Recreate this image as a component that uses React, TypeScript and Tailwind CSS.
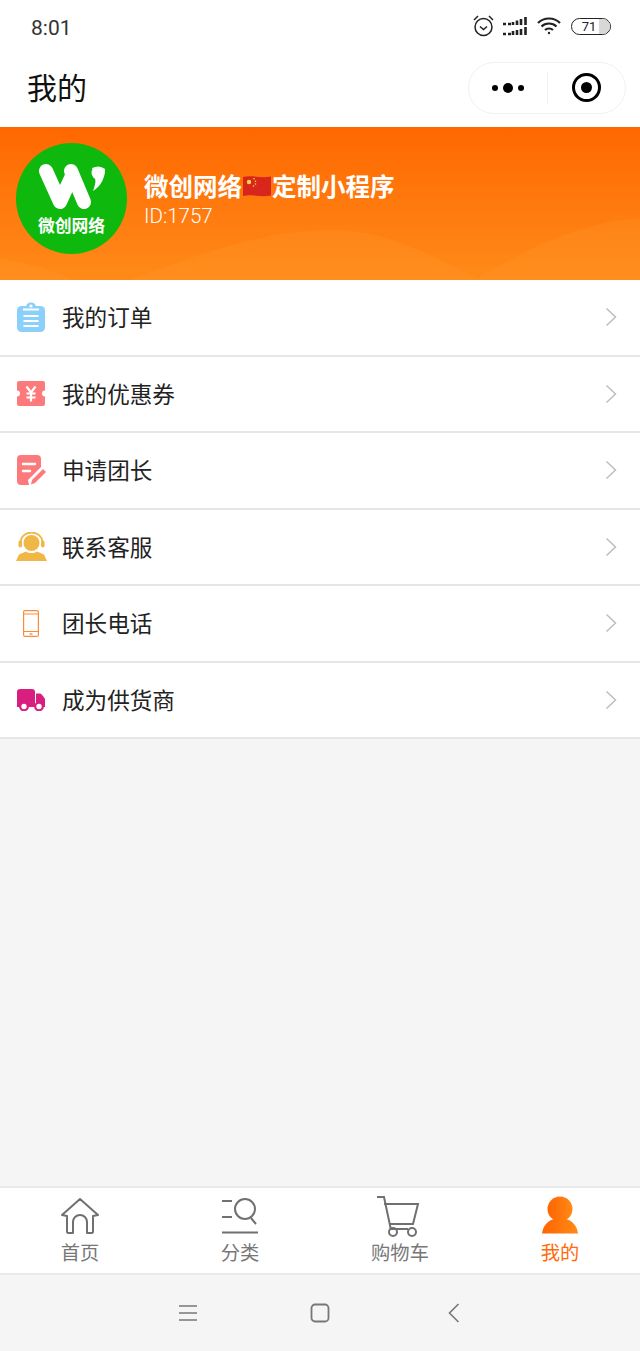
import type { ReactNode } from 'react'

const cjk = "font-['Noto_Sans_CJK_SC','Noto_Sans',sans-serif]"

function ClipboardIcon() {
  return (
    <svg width="30" height="30" viewBox="0 0 30 30">
      <rect x="1" y="4" width="28" height="26" rx="4.5" fill="#8bd0fb" />
      <path d="M10 5.5C10 2 12 .5 15 .5s5 1.500 5 5v2H10z" fill="#8bd0fb" />
      <circle cx="15" cy="4" r="1.6" fill="#fff" />
      <path d="M7 7.500h16M7.500 14h15M7.500 19h15M7.500 24h15" stroke="#fff" strokeWidth="2" />
    </svg>
  )
}

function TicketIcon() {
  return (
    <svg width="30" height="25" viewBox="0 0 30 25">
      <path
        d="M3 0h24a2 2 0 0 1 2 2v7.500a3 3 0 0 0 0 6V23a2 2 0 0 1-2 2H3a2 2 0 0 1-2-2v-7.500a3 3 0 0 0 0-6V2a2 2 0 0 1 2-2z"
        fill="#fd7a7c"
      />
      <path d="M10.500 5.500l4.500 6 4.500-6M15 11.500v9M10.500 12.500h9M10.500 16.500h9" stroke="#fff" strokeWidth="2.200" fill="none" />
    </svg>
  )
}

function ApplyIcon() {
  return (
    <svg width="29" height="30" viewBox="0 0 29 30">
      <path
        d="M4 0h16a4 4 0 0 1 4 4v8L11 25l1 5H4a4 4 0 0 1-4-4V4a4 4 0 0 1 4-4z"
        fill="#fd7a7c"
      />
      <path d="M6 9h12M6 16h7" stroke="#fff" strokeWidth="2.400" strokeLinecap="round" />
      <path d="M14 29.500l1-4.500L26 14l3 3-11 11z" fill="#fd7a7c" />
    </svg>
  )
}

function ServiceIcon() {
  return (
    <svg width="31" height="29" viewBox="0 0 31 29">
      <circle cx="15.500" cy="11" r="8" fill="#f1b746" />
      <path d="M4.500 13V10.500a11 10 0 0 1 22 0V13" fill="none" stroke="#f1b746" strokeWidth="1.800" />
      <rect x="2.500" y="8.500" width="3.500" height="7" rx="1.700" fill="#f1b746" />
      <rect x="25" y="8.500" width="3.500" height="7" rx="1.700" fill="#f1b746" />
      <path d="M0 29l3-6.500 7-3c3 2 8 2 11 0l7 3 3 6.500z" fill="#f1b746" />
    </svg>
  )
}

function PhoneIcon() {
  return (
    <svg width="16" height="27" viewBox="0 0 16 27" fill="none" stroke="#fb8b3c" strokeWidth="1.200">
      <rect x=".6" y=".6" width="14.800" height="25.800" rx="1.500" />
      <path d="M1 4h14M1 21.500h14" />
      <path d="M6.500 24h3" strokeWidth="1.400" />
    </svg>
  )
}

function TruckIcon() {
  return (
    <svg width="28" height="22" viewBox="0 0 28 22">
      <path d="M3 0h12a3 3 0 0 1 3 3v15H0V3a3 3 0 0 1 3-3z" fill="#d81e7f" />
      <path d="M19 4.500h3.500c1 0 1.700.4 2.200 1l2.800 3.500c.3.400.5 1 .5 1.500V18H19z" fill="#d81e7f" />
      <circle cx="7" cy="17.500" r="3.800" fill="#fff" stroke="#d81e7f" strokeWidth="2.200" />
      <circle cx="22" cy="17.500" r="3.800" fill="#fff" stroke="#d81e7f" strokeWidth="2.200" />
    </svg>
  )
}

function Flag() {
  return (
    <svg width="30" height="24" viewBox="0 0 30 24" className="shrink-0">
      <path d="M1 3c9-2 18 1.500 28-.5v19c-10 2-19-1.500-28 .5z" fill="#d8261c" />
      <circle cx="7" cy="8" r="2.200" fill="#fbd64a" />
      <circle cx="12" cy="4.800" r=".8" fill="#fbd64a" />
      <circle cx="13.500" cy="7.200" r=".8" fill="#fbd64a" />
      <circle cx="13.500" cy="10" r=".8" fill="#fbd64a" />
      <circle cx="11.500" cy="12" r=".8" fill="#fbd64a" />
    </svg>
  )
}

function Logo() {
  return (
    <div className="relative w-[111px] h-[111px] rounded-full bg-[#0fb80c] flex flex-col items-center shrink-0">
      <svg width="70" height="52" viewBox="0 0 70 52" className="mt-[17px] shrink-0">
        <path d="M9 11l14 31L34 18" fill="none" stroke="#fff" strokeWidth="14" strokeLinecap="round" strokeLinejoin="round" />
        <path d="M34 11l13 31" fill="none" stroke="#fff" strokeWidth="14" strokeLinecap="round" />
        <circle cx="61" cy="13" r="6.500" fill="#fff" />
        <path d="M55 8c5-2 11-1 13 1 0 9-4 17-12 22 2-5 3-10 2-12z" fill="#fff" />
      </svg>
      <span className={`${cjk} text-white text-[16.8px] leading-5 font-bold mt-[3px]`}>微创网络</span>
    </div>
  )
}

function Row({ icon, label }: { icon: ReactNode; label: string }) {
  return (
    <div className="h-[76.5px] bg-white border-b-2 border-[#e6e6e6] flex items-center">
      <div className="w-[62px] flex justify-center shrink-0">{icon}</div>
      <span className={`${cjk} text-[22.6px] text-[#222] flex-1`}>{label}</span>
      <svg width="12" height="20" viewBox="0 0 12 20" className="mr-[23px]" fill="none" stroke="#bdbdbd" strokeWidth="1.500">
        <path d="M1.500 1.500L10.500 10l-9 8.500" />
      </svg>
    </div>
  )
}

function Tab({ icon, label, active }: { icon: ReactNode; label: string; active?: boolean }) {
  return (
    <div className="flex-1 flex flex-col items-center">
      <div className="h-[46px] flex items-end justify-center">{icon}</div>
      <span className={`${cjk} text-[19.3px] leading-[28px] mt-[4px] ${active ? 'text-[#ff6a0a]' : 'text-[#777]'}`}>{label}</span>
    </div>
  )
}

const rows = [
  { label: '我的订单', icon: <ClipboardIcon /> },
  { label: '我的优惠券', icon: <TicketIcon /> },
  { label: '申请团长', icon: <ApplyIcon /> },
  { label: '联系客服', icon: <ServiceIcon /> },
  { label: '团长电话', icon: <PhoneIcon /> },
  { label: '成为供货商', icon: <TruckIcon /> },
]

export default function App() {
  return (
    <div className="w-[640px] h-[1351px] flex flex-col bg-[#f5f5f5] overflow-hidden">
      {/* status bar */}
      <div className="h-[54px] bg-white flex items-center justify-between pl-[31px] pr-[29px] shrink-0">
        <span className="font-['Roboto',sans-serif] text-[21px] text-[#333] mt-[3px]">8:01</span>
        <div className="flex items-center gap-[9px] -mt-[2px]">
          <svg width="21" height="22" viewBox="0 0 21 22" fill="none" stroke="#222" strokeWidth="1.500">
            <circle cx="10.500" cy="12" r="8.500" />
            <path d="M7 11.500l3.500 3 3.500-3M1 5l4-4M20 5l-4-4" />
          </svg>
          <svg width="24" height="19" viewBox="0 0 24 19" stroke="#222" strokeWidth="2.600">
            <path d="M0 7h3M5 7h3M10 8V5M14 8V3.500M18 8V2M22.500 8V0" />
            <path d="M0 17h3M5 17h3M10 18v-4M14 18v-5M18 18v-6M22.500 18v-8" />
          </svg>
          <svg width="24" height="18" viewBox="0 0 24 18" fill="none" stroke="#222" strokeWidth="2.200" className="ml-[1px]">
            <path d="M1 6c6-6 16-6 22 0M4.500 9.500c4-4 11-4 15 0M8 13c2-2 6-2 8 0" />
            <circle cx="12" cy="16" r="1.200" fill="#222" stroke="none" />
          </svg>
          <div className="relative w-[40px] h-[17px] rounded-full border-[1.5px] border-[#222] overflow-hidden flex items-center justify-center ml-[1px]">
            <div className="absolute right-0 top-0 bottom-0 w-[11px] bg-[#d8d8d8]" />
            <span className="relative font-['Roboto',sans-serif] text-[13px] leading-none text-[#222] -ml-[4px]">71</span>
          </div>
        </div>
      </div>

      {/* nav bar */}
      <div className="h-[73px] bg-white flex items-center justify-between pl-[27px] pr-[14px] shrink-0">
        <span className={`${cjk} text-[30px] text-[#111] leading-none -mt-[10px]`}>我的</span>
        <div className="w-[158px] h-[52px] -mt-[6px] rounded-full border border-[#f1f1f1] flex items-center">
          <div className="w-[78px] flex justify-center items-center gap-[5px]">
            <span className="w-[6px] h-[6px] rounded-full bg-black" />
            <span className="w-[10px] h-[10px] rounded-full bg-black" />
            <span className="w-[6px] h-[6px] rounded-full bg-black" />
          </div>
          <div className="w-px h-[32px] bg-[#f0f0f0]" />
          <div className="flex-1 flex justify-center">
            <div className="w-[29px] h-[29px] rounded-full border-[3.5px] border-black flex items-center justify-center">
              <div className="w-[11px] h-[11px] rounded-full bg-black" />
            </div>
          </div>
        </div>
      </div>

      {/* profile banner */}
      <div className="relative h-[153px] shrink-0 bg-gradient-to-b from-[#ff6700] to-[#ff8a18] flex items-start pt-4 pl-4 overflow-hidden">
        <svg className="absolute left-0 bottom-0" width="640" height="62" viewBox="0 0 640 62">
          <path d="M130 62C190 40 260 12 330 12C390 12 430 38 478 60C520 36 570 6 640 0V62z" fill="#ffa030" opacity="0.2" />
          <path d="M0 40C20 44 55 52 72 62H0z" fill="#ffa030" opacity="0.2" />
        </svg>
        <Logo />
        <div className="relative ml-[17px] mt-[26px] text-white">
          <div className={`${cjk} flex items-center text-[24.5px] leading-[34px] font-bold`}>
            <span>微创网络</span>
            <Flag />
            <span>定制小程序</span>
          </div>
          <div className="font-['Roboto',sans-serif] font-light text-[20.5px] leading-6 mt-[1px]">ID:1757</div>
        </div>
      </div>

      {/* menu */}
      <div className="shrink-0">
        {rows.map((r) => (
          <Row key={r.label} icon={r.icon} label={r.label} />
        ))}
      </div>

      <div className="flex-1" />

      {/* tab bar */}
      <div className="h-[89px] bg-white border-t-2 border-b-2 border-[#e9e9e9] flex shrink-0">
        <Tab
          label="首页"
          icon={
            <svg width="38" height="36" viewBox="0 0 38 36" fill="none" stroke="#707070" strokeWidth="2" strokeLinejoin="round">
              <path d="M1 17L19 1l18 16-5 1v15.500a1.500 1.500 0 0 1-1.500 1.500H26V24a7 7 0 0 0-14 0v11H7.500A1.500 1.500 0 0 1 6 33.500V18z" />
            </svg>
          }
        />
        <Tab
          label="分类"
          icon={
            <svg width="38" height="36" viewBox="0 0 38 36" fill="none" stroke="#707070" strokeWidth="2">
              <path d="M1 3h10M1 19h10M1 34.500h36" />
              <circle cx="24" cy="11" r="10" />
              <path d="M30 20l5 6" />
            </svg>
          }
        />
        <Tab
          label="购物车"
          icon={
            <svg width="44" height="42" viewBox="0 0 44 42" fill="none" stroke="#707070" strokeWidth="2" className="-ml-[4px] -mb-[4px]">
              <path d="M1 1h7l7 33M8 8h34l-5 20H13" />
              <circle cx="17" cy="36" r="4" />
              <circle cx="36" cy="36" r="4" />
              <path d="M15 33h17" />
            </svg>
          }
        />
        <Tab
          label="我的"
          active
          icon={
            <svg width="36" height="38" viewBox="0 0 36 38">
              <defs>
                <linearGradient id="me" x1="0" y1="0" x2="1" y2="0">
                  <stop offset="0" stopColor="#ff6400" />
                  <stop offset="1" stopColor="#ff8a18" />
                </linearGradient>
              </defs>
              <circle cx="18" cy="13" r="12.500" fill="url(#me)" />
              <path d="M0 37.500c1-8 6-13 13-15h10c7 2 12 7 13 15z" fill="url(#me)" />
            </svg>
          }
        />
      </div>

      {/* system navigation */}
      <div className="h-[76px] bg-[#f5f5f5] flex items-center justify-center pr-[3px] shrink-0">
        <svg width="20" height="18" viewBox="0 0 20 18" stroke="#777" strokeWidth="1.500">
          <path d="M1 2h18M1 9h18M1 16h18" />
        </svg>
        <svg width="20" height="20" viewBox="0 0 20 20" fill="none" stroke="#777" strokeWidth="1.800" className="ml-[112px]">
          <rect x="1.500" y="1.500" width="17" height="17" rx="3.500" />
        </svg>
        <svg width="12" height="20" viewBox="0 0 12 20" fill="none" stroke="#777" strokeWidth="1.600" className="ml-[118px]">
          <path d="M10.500 1L1.500 10l9 9" />
        </svg>
      </div>
    </div>
  )
}
